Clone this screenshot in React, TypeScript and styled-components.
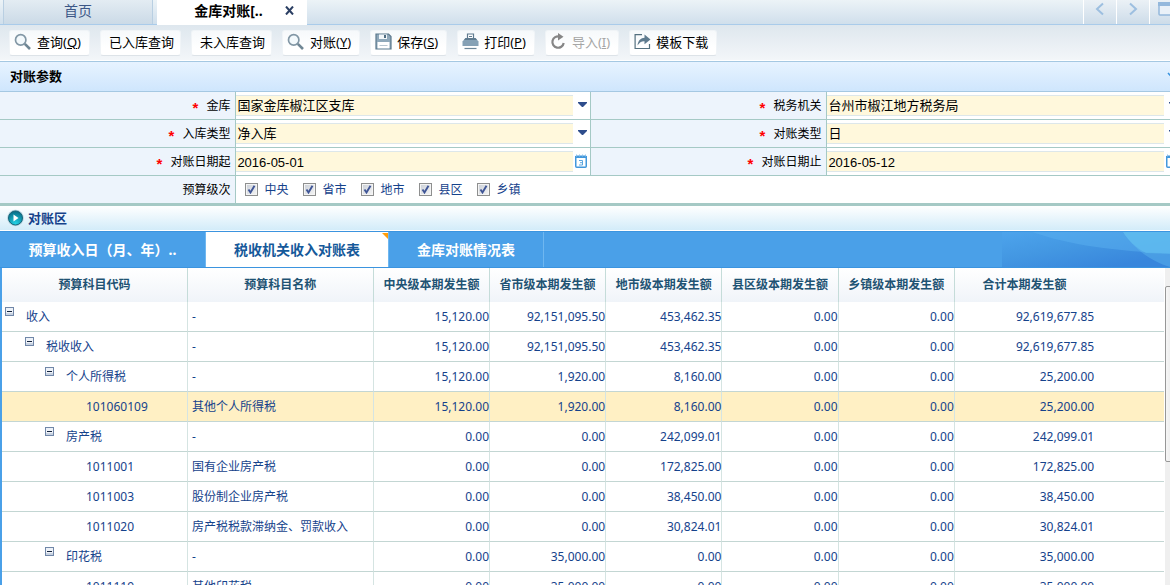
import React from "react";
import styled, { createGlobalStyle, css } from "styled-components";

const ui = `"Noto Sans", "Noto Sans CJK SC", sans-serif`;

const GlobalStyle = createGlobalStyle`
  *, *::before, *::after { box-sizing: border-box; }
  html, body { height: 100%; }
  body {
    margin: 0;
    overflow: hidden;
    background: #fff;
    color: #000;
    font: 12px/20px ${ui};
  }
  #root { height: 100%; }
  button, input, select { font: inherit; color: inherit; }
`;

/* The workspace runs slightly past the window on the right. */
const Workspace = styled.div`
  display: flex;
  flex-direction: column;
  width: calc(100% + 12px);
  height: 100%;
`;

/* ---------- window tabs ---------- */

const WindowTabs = styled.nav`
  display: flex;
  flex: none;
  height: 25px;
  border-bottom: 1px solid #a9cbea;
  background: linear-gradient(#ecf3f7, #d0dfec);
`;

const WindowTab = styled.div<{ $active?: boolean }>`
  display: flex;
  align-items: center;
  justify-content: center;
  gap: 22px;
  width: 150px;
  height: 24px;
  margin-left: 3px;
  padding-bottom: 2px;
  border: solid #b9cfe2;
  border-width: 0 1px;
  background: linear-gradient(#e3ecf3, #cbdae7);
  ${(p) =>
    p.$active &&
    css`
      height: 25px;
      margin-left: 4px;
      padding: 0 0 4px 24px;
      border-color: #fff;
      background: #fff;
    `}
`;

const TabLink = styled.button<{ $active?: boolean }>`
  padding: 0;
  border: 0;
  background: none;
  font-size: 14px;
  line-height: 20px;
  color: ${(p) => (p.$active ? "#000" : "#3c5787")};
  font-weight: ${(p) => (p.$active ? 700 : 400)};
`;

const IconButton = styled.button`
  display: flex;
  padding: 0;
  border: 0;
  background: none;
`;

const TabTools = styled.div`
  display: flex;
  margin-left: auto;
`;

const TabTool = styled.button`
  display: flex;
  align-items: flex-start;
  justify-content: center;
  width: 33px;
  height: 24px;
  padding: 2px 0 0;
  border: 0;
  border-left: 1px solid #fff;
  background: linear-gradient(#ebf1f6, #cddce9);
`;

/* ---------- toolbar ---------- */

const Toolbar = styled.div`
  display: flex;
  flex: none;
  align-items: center;
  gap: 10px;
  height: 36px;
  padding: 0 9px;
  border-bottom: 1px solid #fff;
  background: linear-gradient(#dee7ee, #f3f6f9);
`;

const ToolButton = styled.button`
  display: flex;
  align-items: center;
  gap: 5px;
  height: 26px;
  padding: 0 8px 2px 4px;
  border: 1px solid #f0f4f7;
  border-bottom-color: #dde3e8;
  border-radius: 3px;
  background: linear-gradient(#f6f9fb, #fff 70%);
  font-size: 13px;
  line-height: 20px;
  white-space: nowrap;
  &:disabled { color: #a6a6a6; }
`;

const TextOnlyButton = styled(ToolButton)`
  padding-left: 8px;
  padding-right: 6px;
`;

/* ---------- parameter form ---------- */

const ParamTitle = styled.h2`
  flex: none;
  display: flex;
  align-items: center;
  justify-content: space-between;
  height: 31px;
  margin: 0;
  padding: 0 4px 2px 10px;
  border: solid #a5c8e2;
  border-width: 1px 0;
  background: linear-gradient(#e7f3ff, #cfe6fd);
  font-size: 13px;
  line-height: 20px;
`;

const ParamForm = styled.form`
  flex: none;
  display: grid;
  grid-template-columns: 2fr 3fr 2fr 3fr;
  grid-auto-rows: 28px;
  border-bottom: 1px solid #a5c9c5;
`;

const LabelCell = styled.div`
  display: flex;
  align-items: center;
  justify-content: flex-end;
  gap: 8px;
  padding-right: 5px;
  border: solid #a5c9c5;
  border-width: 0 1px 1px 0;
  background: #edf4fc;
`;

const Required = styled.span`
  color: #f00;
  font: 700 15px/14px "Liberation Sans", sans-serif;
  padding-top: 4px;
`;

const FieldCell = styled.div<{ $wide?: boolean }>`
  position: relative;
  display: flex;
  align-items: center;
  padding-right: 17px;
  border: solid #a5c9c5;
  border-width: 0 1px 1px 0;
  ${(p) => p.$wide && "grid-column: span 3;"}
`;

const fieldBox = css`
  appearance: none;
  flex: 1;
  min-width: 0;
  height: 21px;
  padding: 0 1px;
  border: solid #dde7ea;
  border-width: 1px 0;
  border-radius: 0;
  background: #fff8dc;
  color: #000;
  font-size: 13px;
  line-height: 18px;
  outline: none;
`;

const ComboBox = styled.select`
  ${fieldBox}
  padding-bottom: 3px;
`;

const DateBox = styled.input`
  ${fieldBox}
  padding-top: 1px;
  font-family: "Liberation Sans", sans-serif;
`;

const FieldMark = styled.span`
  position: absolute;
  right: 3px;
  top: 0;
  bottom: 0;
  display: flex;
  align-items: center;
  padding-bottom: 2px;
  pointer-events: none;
`;

const CheckLabel = styled.label`
  display: flex;
  align-items: center;
  gap: 6px;
  width: 58px;
  color: #15428b;
  white-space: nowrap;
`;

const CheckList = styled.div`
  display: flex;
  padding-left: 9px;
`;

const CheckBox = styled.input`
  appearance: none;
  flex: none;
  width: 13px;
  height: 13px;
  margin: 0;
  border: 1px solid #8e8f8f;
  background: linear-gradient(135deg, #c9ced6, #f6f6f6);
  box-shadow: inset 0 0 0 1px #f4f4f4;
  &:checked {
    background-image: url("data:image/svg+xml,%3Csvg xmlns='http://www.w3.org/2000/svg' viewBox='0 0 11 11'%3E%3Cpath d='M2.5 5.5 4.5 8.5 8.5 1.8' fill='none' stroke='%233f5596' stroke-width='1.9'/%3E%3C/svg%3E"),
      linear-gradient(135deg, #c9ced6, #f6f6f6);
  }
`;

/* ---------- result area ---------- */

const ResultTitle = styled.h2`
  flex: none;
  display: flex;
  align-items: center;
  gap: 4px;
  height: 26px;
  margin: 0;
  padding: 0 7px;
  border-top: 1px solid #a5c9c5;
  border-bottom: 1px solid #fff;
  background: linear-gradient(#fff, #d3ecf9);
  color: #15428b;
  font-size: 13px;
  line-height: 20px;
`;

const SheetTabs = styled.div`
  position: relative;
  flex: none;
  display: flex;
  height: 37px;
  border: solid #3b94df;
  border-width: 1px 0;
  background: #4aa0e8;
`;

const SheetTab = styled.button<{ $active?: boolean; $wide?: boolean }>`
  position: relative;
  width: ${(p) => (p.$wide ? 206 : p.$active ? 183 : 155)}px;
  padding: 0;
  border: 0;
  border-right: 1px solid #6fb7f0;
  background: ${(p) => (p.$active ? "#fff" : "transparent")};
  color: ${(p) => (p.$active ? "#15599a" : "#fff")};
  font-size: 14px;
  font-weight: 700;
  line-height: 20px;
`;

const TabCorner = styled.svg`
  position: absolute;
  top: 1px;
  right: 0;
`;

const TabWave = styled.svg`
  margin-left: auto;
`;

const GridPanel = styled.div`
  flex: 1;
  min-height: 0;
  display: flex;
  gap: 1px;
  overflow: hidden;
  border-left: 2px solid #4aa0e8;
`;

const GridTable = styled.table`
  flex: 1;
  align-self: flex-start;
  table-layout: fixed;
  border-collapse: separate;
  border-spacing: 0;
  color: #15428b;
`;

const Column = styled.col<{ $share: number }>`
  width: ${(p) => p.$share}%;
`;

const HeadCell = styled.th<{ $open?: boolean }>`
  height: 34px;
  padding: 0;
  border-right: ${(p) => (p.$open ? "0" : "1px solid #c5dcd9")};
  background: linear-gradient(#fff, #f0f4f9);
  color: #1f5373;
  font-weight: 700;
  white-space: nowrap;
`;

const Row = styled.tr<{ $selected?: boolean }>`
  background: ${(p) => (p.$selected ? "#fff0c4" : "#fff")};
`;

const Cell = styled.td<{ $number?: boolean; $open?: boolean }>`
  height: 30px;
  padding: 0 ${(p) => (p.$number ? 0 : 4)}px;
  border-bottom: 1px solid #c3d6d3;
  border-right: ${(p) => (p.$open ? "0" : "1px solid #d5e4e2")};
  text-align: ${(p) => (p.$number ? "right" : "left")};
  white-space: nowrap;
`;

const TreeNode = styled.div<{ $level: number }>`
  display: flex;
  gap: 12px;
  padding-left: ${(p) => p.$level * 20}px;
  margin-left: -1px;
`;

const Toggle = styled.button`
  display: flex;
  flex: none;
  align-self: flex-start;
  width: 9px;
  height: 9px;
  padding: 0;
  border: 0;
  background: none;
`;

const ToggleSpace = styled.span`
  width: 9px;
`;

const ScrollTrack = styled.div`
  flex: none;
  width: 17px;
  padding-top: 18px;
  background: #efefef;
`;

const ScrollThumb = styled.div`
  display: flex;
  align-items: center;
  justify-content: center;
  height: 176px;
  border: 1px solid #979797;
  border-radius: 2px;
  background: linear-gradient(90deg, #f6f6f6, #d9d9d9);
`;

/* ---------- icons ---------- */

const CloseIcon = () => (
  <svg width="9" height="9" viewBox="0 0 9 9">
    <path d="M1 .5 8 8.5M8 .5 1 8.5" stroke="#2b3f63" strokeWidth="2" />
  </svg>
);

const Chevron = ({ right }: { right?: boolean }) => (
  <svg width="10" height="14" viewBox="0 0 10 14">
    <path
      d={right ? "M2 1.5 8 7 2 12.5" : "M8 1.5 2 7 8 12.5"}
      fill="none"
      stroke="#9dbfe0"
      strokeWidth="2"
    />
  </svg>
);

const PanelIcon = () => (
  <svg width="16" height="14" viewBox="0 0 16 14">
    <rect x="1" y="1" width="14" height="12" rx="1" fill="#eaf1f8" stroke="#94b8dc" strokeWidth="1.5" />
    <path d="M0 0h16v4H0z" fill="#94b8dc" />
  </svg>
);

const SearchIcon = () => (
  <svg width="18" height="18" viewBox="0 0 18 18" fill="none">
    <circle cx="6.7" cy="6.9" r="5.2" fill="#f3f9fc" stroke="#8297a5" strokeWidth="1.7" />
    <path d="M10.8 10.8 16 16" stroke="#6f8694" strokeWidth="2.6" />
  </svg>
);

const SaveIcon = () => (
  <svg width="17" height="17" viewBox="0 0 17 17" fill="none">
    <path d="M1 1h12.5L16 3.500V16H1z" fill="#8fa8ba" stroke="#5b788c" strokeWidth="1.200" />
    <path d="M4 1.500h8V6H4z" fill="#f2f7fa" />
    <path d="M9 2h2v3H9z" fill="#4d6b80" />
    <path d="M2.500 9h12v6.400h-12z" fill="#fff" />
    <path d="M4.500 12.500h8" stroke="#b9c7d1" />
  </svg>
);

const PrintIcon = () => (
  <svg width="17" height="17" viewBox="0 0 17 17" fill="none">
    <path d="M5.500 5V1h6v4" fill="#fff" stroke="#5f7b8f" strokeWidth="1.200" />
    <path d="M7 3.500h3" stroke="#5f7b8f" />
    <path d="M3.500 5h10L16.500 8.500V13h-16V8.500z" fill="#86a1b5" />
    <path d="M3.500 5h10L15 7H2z" fill="#5f7b8f" />
    <path d="M2.500 15.500h12" stroke="#6d8799" strokeWidth="1.200" />
  </svg>
);

const ReloadIcon = () => (
  <svg width="17" height="17" viewBox="0 0 17 17" fill="none">
    <path d="M9.500 3.500A5.700 5.700 0 1 0 13.700 10" stroke="#868686" strokeWidth="2.200" />
    <path d="M8 0 13.500 3.700 8 7.500z" fill="#868686" />
  </svg>
);

const ShareIcon = () => (
  <svg width="17" height="17" viewBox="0 0 17 17" fill="none">
    <path d="M8 1.600H1.100V15.500H15.500V11" stroke="#54707f" strokeWidth="1.200" />
    <path d="M3.500 12.500C4 7.500 7 5 10.500 4.800V1.500L16.500 6.500 10.500 11.300V8.200C7.500 8 5.500 9.500 3.500 12.500z" fill="#5f7b8f" />
  </svg>
);

const DropArrow = () => (
  <svg width="9" height="5" viewBox="0 0 9 5">
    <path d="M0 0h9v1L5 5H4L0 1z" fill="#2e4d8c" />
  </svg>
);

const CalendarIcon = () => (
  <svg width="12" height="14" viewBox="0 0 12 14" fill="none">
    <rect x=".75" y="2.250" width="10.500" height="11" rx="1" fill="#fff" stroke="#4398dc" strokeWidth="1.500" />
    <path d="M0 2h12v2H0z" fill="#4398dc" />
    <path d="M1.500 .5v2M4.500 .5v2M7.500 .5v2M10.500 .5v2" stroke="#8fc2ec" />
    <path d="M4 6.500h3.500v4.500H4M5 8.700h2.500" stroke="#5ea6de" />
  </svg>
);

const PlayIcon = () => (
  <svg width="17" height="18" viewBox="0 0 17 18">
    <defs>
      <radialGradient id="play" cx=".5" cy=".9" r=".9">
        <stop offset="0" stopColor="#22d3e6" />
        <stop offset="1" stopColor="#076a84" />
      </radialGradient>
    </defs>
    <circle cx="8.500" cy="9" r="8.300" fill="#b5d3de" />
    <circle cx="8.500" cy="9" r="7" fill="url(#play)" stroke="#17657a" />
    <path d="M6.500 5.500 11.500 9l-5 3.500z" fill="#fff" />
  </svg>
);

const MinusIcon = () => (
  <svg width="9" height="9" viewBox="0 0 9 9">
    <rect x=".5" y=".5" width="8" height="8" fill="#eef2f8" stroke="#7187a8" />
    <path d="M1 6h7v2H1z" fill="#c9d3e2" />
    <path d="M2 4.500h5" stroke="#14233c" />
  </svg>
);

/* ---------- data ---------- */

type Tool = { text: string; hotkey?: string; icon?: React.ReactNode; disabled?: boolean };

const tools: Tool[] = [
  { text: "查询", hotkey: "Q", icon: <SearchIcon /> },
  { text: "已入库查询" },
  { text: "未入库查询" },
  { text: "对账", hotkey: "Y", icon: <SearchIcon /> },
  { text: "保存", hotkey: "S", icon: <SaveIcon /> },
  { text: "打印", hotkey: "P", icon: <PrintIcon /> },
  { text: "导入", hotkey: "I", icon: <ReloadIcon />, disabled: true },
  { text: "模板下载", icon: <ShareIcon /> },
];

type Field = { id: string; label: string; value: string; date?: boolean };

const fields: Field[] = [
  { id: "treasury", label: "金库", value: "国家金库椒江区支库" },
  { id: "office", label: "税务机关", value: "台州市椒江地方税务局" },
  { id: "entryType", label: "入库类型", value: "净入库" },
  { id: "checkType", label: "对账类型", value: "日" },
  { id: "dateFrom", label: "对账日期起", value: "2016-05-01", date: true },
  { id: "dateTo", label: "对账日期止", value: "2016-05-12", date: true },
];

const levels = ["中央", "省市", "地市", "县区", "乡镇"];

const columns = [
  { title: "预算科目代码", share: 16 },
  { title: "预算科目名称", share: 16 },
  { title: "中央级本期发生额", share: 10 },
  { title: "省市级本期发生额", share: 10 },
  { title: "地市级本期发生额", share: 10 },
  { title: "县区级本期发生额", share: 10 },
  { title: "乡镇级本期发生额", share: 10 },
  { title: "合计本期发生额", share: 12 },
];

type Entry = { code: string; level: number; name: string; leaf?: boolean; selected?: boolean; sums: string[] };

const entries: Entry[] = [
  { code: "收入", level: 0, name: "-", sums: ["15,120.00", "92,151,095.50", "453,462.35", "0.00", "0.00", "92,619,677.85"] },
  { code: "税收收入", level: 1, name: "-", sums: ["15,120.00", "92,151,095.50", "453,462.35", "0.00", "0.00", "92,619,677.85"] },
  { code: "个人所得税", level: 2, name: "-", sums: ["15,120.00", "1,920.00", "8,160.00", "0.00", "0.00", "25,200.00"] },
  { code: "101060109", level: 3, leaf: true, selected: true, name: "其他个人所得税", sums: ["15,120.00", "1,920.00", "8,160.00", "0.00", "0.00", "25,200.00"] },
  { code: "房产税", level: 2, name: "-", sums: ["0.00", "0.00", "242,099.01", "0.00", "0.00", "242,099.01"] },
  { code: "1011001", level: 3, leaf: true, name: "国有企业房产税", sums: ["0.00", "0.00", "172,825.00", "0.00", "0.00", "172,825.00"] },
  { code: "1011003", level: 3, leaf: true, name: "股份制企业房产税", sums: ["0.00", "0.00", "38,450.00", "0.00", "0.00", "38,450.00"] },
  { code: "1011020", level: 3, leaf: true, name: "房产税税款滞纳金、罚款收入", sums: ["0.00", "0.00", "30,824.01", "0.00", "0.00", "30,824.01"] },
  { code: "印花税", level: 2, name: "-", sums: ["0.00", "35,000.00", "0.00", "0.00", "0.00", "35,000.00"] },
  { code: "1011119", level: 3, leaf: true, name: "其他印花税", sums: ["0.00", "35,000.00", "0.00", "0.00", "0.00", "35,000.00"] },
];

export default function App() {
  return (
    <>
      <GlobalStyle />
      <Workspace>
        <WindowTabs>
          <WindowTab>
            <TabLink>首页</TabLink>
          </WindowTab>
          <WindowTab $active>
            <TabLink $active>金库对账[..</TabLink>
            <IconButton aria-label="关闭">
              <CloseIcon />
            </IconButton>
          </WindowTab>
          <TabTools>
            <TabTool aria-label="向左"><Chevron /></TabTool>
            <TabTool aria-label="向右"><Chevron right /></TabTool>
            <TabTool aria-label="窗口"><PanelIcon /></TabTool>
          </TabTools>
        </WindowTabs>

        <Toolbar>
          {tools.map((t) => {
            const Kind = t.icon ? ToolButton : TextOnlyButton;
            return (
              <Kind key={t.text} disabled={t.disabled}>
                {t.icon}
                <span>
                  {t.text}
                  {t.hotkey && <>(<u>{t.hotkey}</u>)</>}
                </span>
              </Kind>
            );
          })}
        </Toolbar>

        <ParamTitle>
          对账参数
          <svg width="11" height="8" viewBox="0 0 11 8">
            <path d="M1 1 5.500 6 10 1" fill="none" stroke="#3b94df" strokeWidth="1.500" />
          </svg>
        </ParamTitle>
        <ParamForm>
          {fields.map((f) => (
            <React.Fragment key={f.id}>
              <LabelCell>
                <Required>*</Required>
                <label htmlFor={f.id}>{f.label}</label>
              </LabelCell>
              <FieldCell>
                {f.date ? (
                  <DateBox id={f.id} defaultValue={f.value} />
                ) : (
                  <ComboBox id={f.id}>
                    <option>{f.value}</option>
                  </ComboBox>
                )}
                <FieldMark>{f.date ? <CalendarIcon /> : <DropArrow />}</FieldMark>
              </FieldCell>
            </React.Fragment>
          ))}
          <LabelCell>预算级次</LabelCell>
          <FieldCell $wide>
            <CheckList>
              {levels.map((l) => (
                <CheckLabel key={l}>
                  <CheckBox type="checkbox" defaultChecked />
                  {l}
                </CheckLabel>
              ))}
            </CheckList>
          </FieldCell>
        </ParamForm>

        <ResultTitle>
          <PlayIcon />
          对账区
        </ResultTitle>
        <SheetTabs>
          <SheetTab $wide>预算收入日（月、年）..</SheetTab>
          <SheetTab $active>
            税收机关收入对账表
            <TabCorner width="6" height="6" viewBox="0 0 6 6">
              <path d="M0 0h6v6z" fill="#ff9d0a" />
            </TabCorner>
          </SheetTab>
          <SheetTab>金库对账情况表</SheetTab>
          <TabWave width="180" height="35" viewBox="0 0 180 35">
            <defs>
              <linearGradient id="wave" x1="0" y1="0" x2="1" y2="1">
                <stop offset="0" stopColor="#4da4ec" />
                <stop offset=".4" stopColor="#4397e2" />
                <stop offset=".8" stopColor="#3886dc" />
                <stop offset="1" stopColor="#3886dc" />
              </linearGradient>
            </defs>
            <path d="M0 0h180v35H0z" fill="url(#wave)" />
            <path d="M30 0C70 14 120 20 180 22V0z" fill="#5ab0f0" opacity=".5" />
            <path d="M121 0C130 14 145 28 168 35H180V0z" fill="#62bdf0" opacity=".4" />
            <path d="M121 0C126 8 134 16 144 21L180 22V0z" fill="#62c0f0" opacity=".6" />
          </TabWave>
        </SheetTabs>

        <GridPanel>
          <GridTable>
            <colgroup>
              {columns.map((c) => (
                <Column key={c.title} $share={c.share} />
              ))}
              <Column $share={6} />
            </colgroup>
            <thead>
              <tr>
                {columns.map((c, i) => (
                  <HeadCell key={c.title} $open={i === columns.length - 1}>{c.title}</HeadCell>
                ))}
                <HeadCell $open as="td" />
              </tr>
            </thead>
            <tbody>
              {entries.map((e) => (
                <Row key={e.code} $selected={e.selected}>
                  <Cell>
                    <TreeNode $level={e.level}>
                      {e.leaf ? (
                        <ToggleSpace />
                      ) : (
                        <Toggle aria-label="折叠">
                          <MinusIcon />
                        </Toggle>
                      )}
                      <span>{e.code}</span>
                    </TreeNode>
                  </Cell>
                  <Cell>{e.name}</Cell>
                  {e.sums.map((s, i) => (
                    <Cell key={i} $number $open={i === e.sums.length - 1}>{s}</Cell>
                  ))}
                  <Cell $open />
                </Row>
              ))}
            </tbody>
          </GridTable>
          <ScrollTrack>
            <ScrollThumb>
              <svg width="8" height="8" viewBox="0 0 8 8">
                <path d="M0 .5h8M0 3.500h8M0 6.500h8" stroke="#555" />
              </svg>
            </ScrollThumb>
          </ScrollTrack>
        </GridPanel>
      </Workspace>
    </>
  );
}
